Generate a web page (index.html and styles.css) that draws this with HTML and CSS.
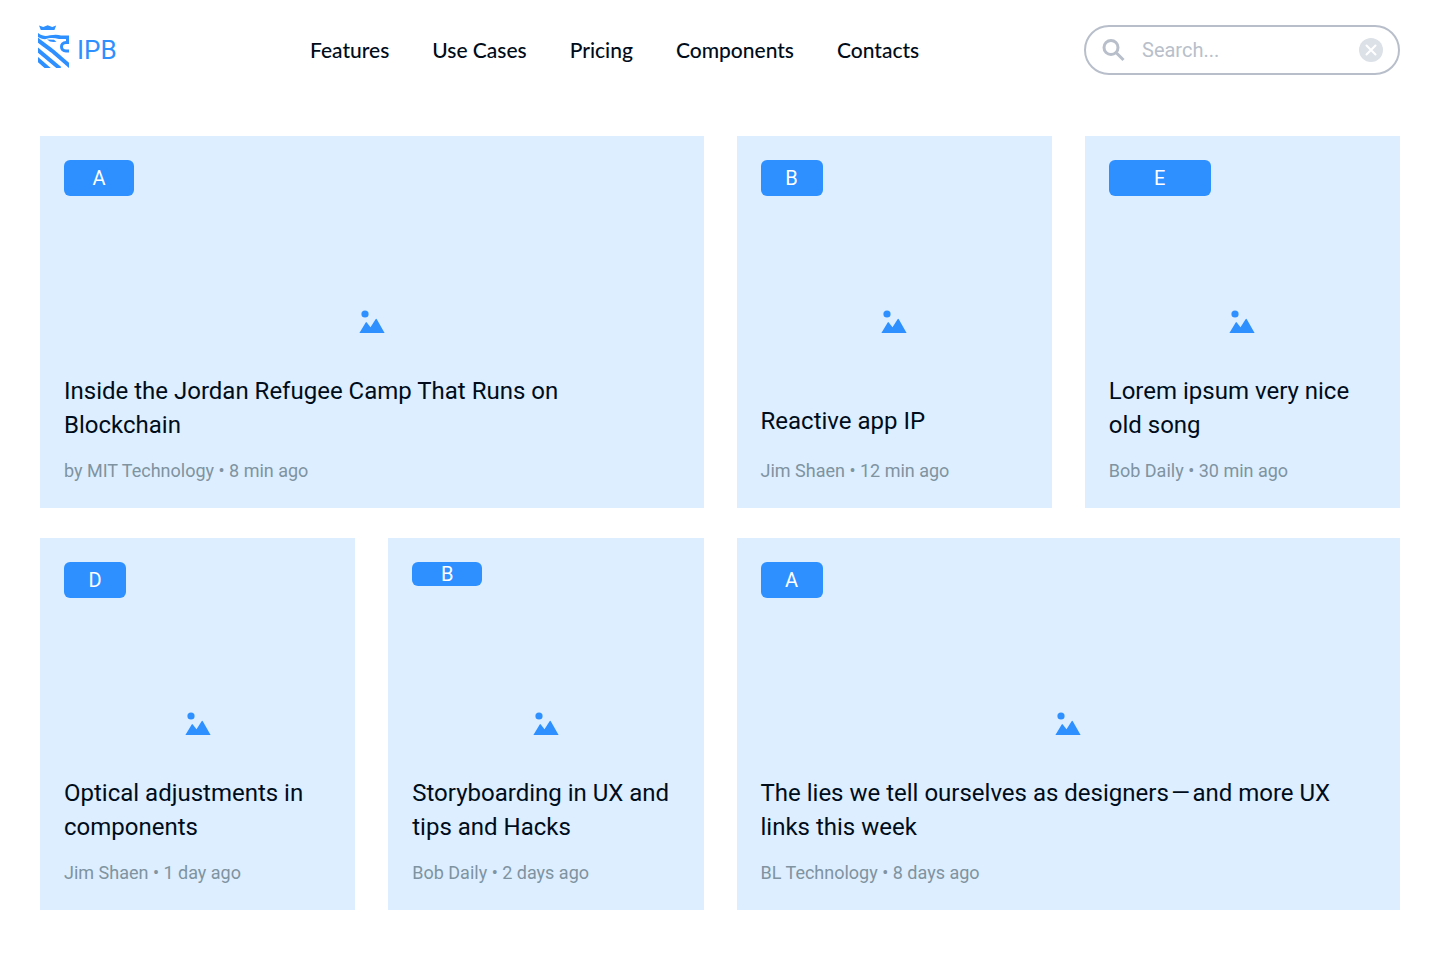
FILE: index.html
```html
<!DOCTYPE html>
<html lang="en">
<head>
<meta charset="utf-8">
<meta name="viewport" content="width=device-width, initial-scale=1">
<title>IPB</title>
<link rel="stylesheet" href="styles.css">
</head>
<body>
<svg class="sprite" aria-hidden="true">
  <symbol id="picture" viewBox="0 0 26 24">
    <circle cx="6" cy="4" r="3.6"/>
    <path d="M.4 23 6.7 12.4q.5-.8 1.1 0l3.7 4.9 5.1-8q.6-.9 1.2 0L25.6 23Z"/>
  </symbol>
</svg>
<header class="header">
  <a class="logo" href="#">
    <svg class="logo-mark" viewBox="38 25 31 43" aria-hidden="true">
      <path d="M39 25.500l4.200 1.500 4.500-1.800 4.500 1.800 4-1.500-1.800 4.500H40.800Z"/>
      <path d="M47 39.500l7 .3 2.500 2-3 .3q-4-.1-6.500-2.600Z"/>
      <path d="M38 33c5 3.500 8 3.300 12 2.300 5-1 8-.8 11 .2h8v6h-3v-2.500h-7c-6-1.500-10-1-14 .3C42 39 40 38 38 37Z"/>
      <g class="logo-lines">
        <path class="logo-jaw" d="M69 42.500h-3c-6 0-6 8.500 0 8.500h3"/>
        <path d="M36 38.500c6 5 11 8.500 17 13l18 15.500M36 48.500l24 20M36 58l14 12"/>
      </g>
    </svg>
    <span>IPB</span>
  </a>
  <nav class="nav" aria-label="Main">
    <a href="#">Features</a>
    <a href="#">Use Cases</a>
    <a href="#">Pricing</a>
    <a href="#">Components</a>
    <a href="#">Contacts</a>
  </nav>
  <form class="search" role="search">
    <svg class="search-icon" viewBox="0 0 24 24" aria-hidden="true"><circle cx="9" cy="9.500" r="7"/><path d="M14.500 15l7 7"/></svg>
    <input class="search-input" type="text" placeholder="Search..." aria-label="Search">
    <button class="search-clear" type="reset" aria-label="Clear search">
      <svg viewBox="0 0 24 24" aria-hidden="true"><path d="M7.500 7.500l9 9M16.500 7.500l-9 9"/></svg>
    </button>
  </form>
</header>
<main class="gallery">
  <article class="card card-wide">
    <button class="tag tag-medium" type="button">A</button>
    <svg class="picture" aria-hidden="true"><use href="#picture"/></svg>
    <h2 class="title">Inside the Jordan Refugee Camp That Runs on Blockchain</h2>
    <p class="meta">by MIT Technology • 8 min ago</p>
  </article>
  <article class="card">
    <button class="tag" type="button">B</button>
    <svg class="picture" aria-hidden="true"><use href="#picture"/></svg>
    <h2 class="title title-single">Reactive app IP</h2>
    <p class="meta">Jim Shaen • 12 min ago</p>
  </article>
  <article class="card">
    <button class="tag tag-large" type="button">E</button>
    <svg class="picture" aria-hidden="true"><use href="#picture"/></svg>
    <h2 class="title">Lorem ipsum very nice old song</h2>
    <p class="meta">Bob Daily • 30 min ago</p>
  </article>
  <article class="card">
    <button class="tag" type="button">D</button>
    <svg class="picture" aria-hidden="true"><use href="#picture"/></svg>
    <h2 class="title">Optical adjustments in components</h2>
    <p class="meta">Jim Shaen • 1 day ago</p>
  </article>
  <article class="card">
    <button class="tag tag-medium tag-short" type="button">B</button>
    <svg class="picture" aria-hidden="true"><use href="#picture"/></svg>
    <h2 class="title">Storyboarding in UX and tips and Hacks</h2>
    <p class="meta">Bob Daily • 2 days ago</p>
  </article>
  <article class="card card-wide">
    <button class="tag" type="button">A</button>
    <svg class="picture" aria-hidden="true"><use href="#picture"/></svg>
    <h2 class="title">The lies we tell ourselves as designers&#8202;—&#8202;and more UX links this week</h2>
    <p class="meta">BL Technology • 8 days ago</p>
  </article>
</main>
</body>
</html>
```
FILE: styles.css
```css
* { box-sizing: border-box; }
body {
  margin: 0;
  background: #fff;
  color: #000c1a;
  font-family: Roboto, "Liberation Sans", sans-serif;
}
.sprite { display: none; }
.header {
  display: flex;
  align-items: center;
  padding: 25px 40px 0 38px;
}
.logo {
  display: flex;
  flex: 0 0 272px;
  align-items: center;
  gap: 8px;
  height: 50px;
  padding-bottom: 7px;
  color: #2e90ff;
  font-size: 26px;
  line-height: 32px;
  text-decoration: none;
}
.logo span { padding-top: 6px; }
.logo-mark { width: 31px; height: 43px; fill: #2e90ff; }
.logo-lines { fill: none; stroke: #2e90ff; stroke-width: 4; }
.logo-jaw { stroke-width: 3; }
.nav { display: flex; gap: 43px; }
.nav a {
  color: #000c1a;
  font: 500 21px/28px Lato, "Open Sans", sans-serif;
  text-decoration: none;
  white-space: nowrap;
}
.search {
  display: flex;
  align-items: center;
  width: 316px;
  height: 50px;
  margin-left: auto;
  padding: 0 15px 0 16px;
  border: 2px solid #b8bfca;
  border-radius: 25px;
}
.search-icon {
  flex: none;
  width: 24px;
  height: 24px;
  fill: none;
  stroke: #b8bfca;
  stroke-width: 3;
}
.search-input {
  flex: 1;
  min-width: 0;
  padding: 0 16px;
  border: 0;
  outline: 0;
  background: none;
  color: #000c1a;
  font: 20px/28px Roboto, sans-serif;
}
.search-input::placeholder { color: #b8bfca; opacity: 1; }
.search-clear {
  flex: none;
  width: 24px;
  height: 24px;
  padding: 0;
  border: 0;
  border-radius: 50%;
  background: #dce1e8;
}
.search-clear svg {
  display: block;
  fill: none;
  stroke: #fff;
  stroke-width: 2;
  stroke-linecap: round;
}
.gallery {
  display: grid;
  grid-template-columns: repeat(4, 1fr);
  gap: 30px 33px;
  padding: 61px 40px 50px;
}
.card {
  display: flex;
  flex-direction: column;
  min-height: 372px;
  padding: 24px;
  background: #dceeff;
}
.card-wide { grid-column: span 2; }
.tag {
  width: 62px;
  height: 36px;
  padding: 0;
  border: 0;
  border-radius: 6px;
  background: #2e90ff;
  color: #fff;
  font: 20px/24px Roboto, sans-serif;
}
.tag-medium { width: 70px; }
.tag-large { width: 102px; }
.tag-short { height: 24px; margin-bottom: 12px; }
.picture {
  align-self: center;
  width: 26px;
  height: 24px;
  margin: 114px 0 40px;
  fill: #2e90ff;
}
.title {
  margin: 0;
  font-size: 24px;
  font-weight: 400;
  line-height: 34px;
}
.title-single { margin-top: 30px; }
.meta {
  margin: auto 0 0;
  color: #7f93a0;
  font-size: 18px;
  line-height: 26px;
}
```
